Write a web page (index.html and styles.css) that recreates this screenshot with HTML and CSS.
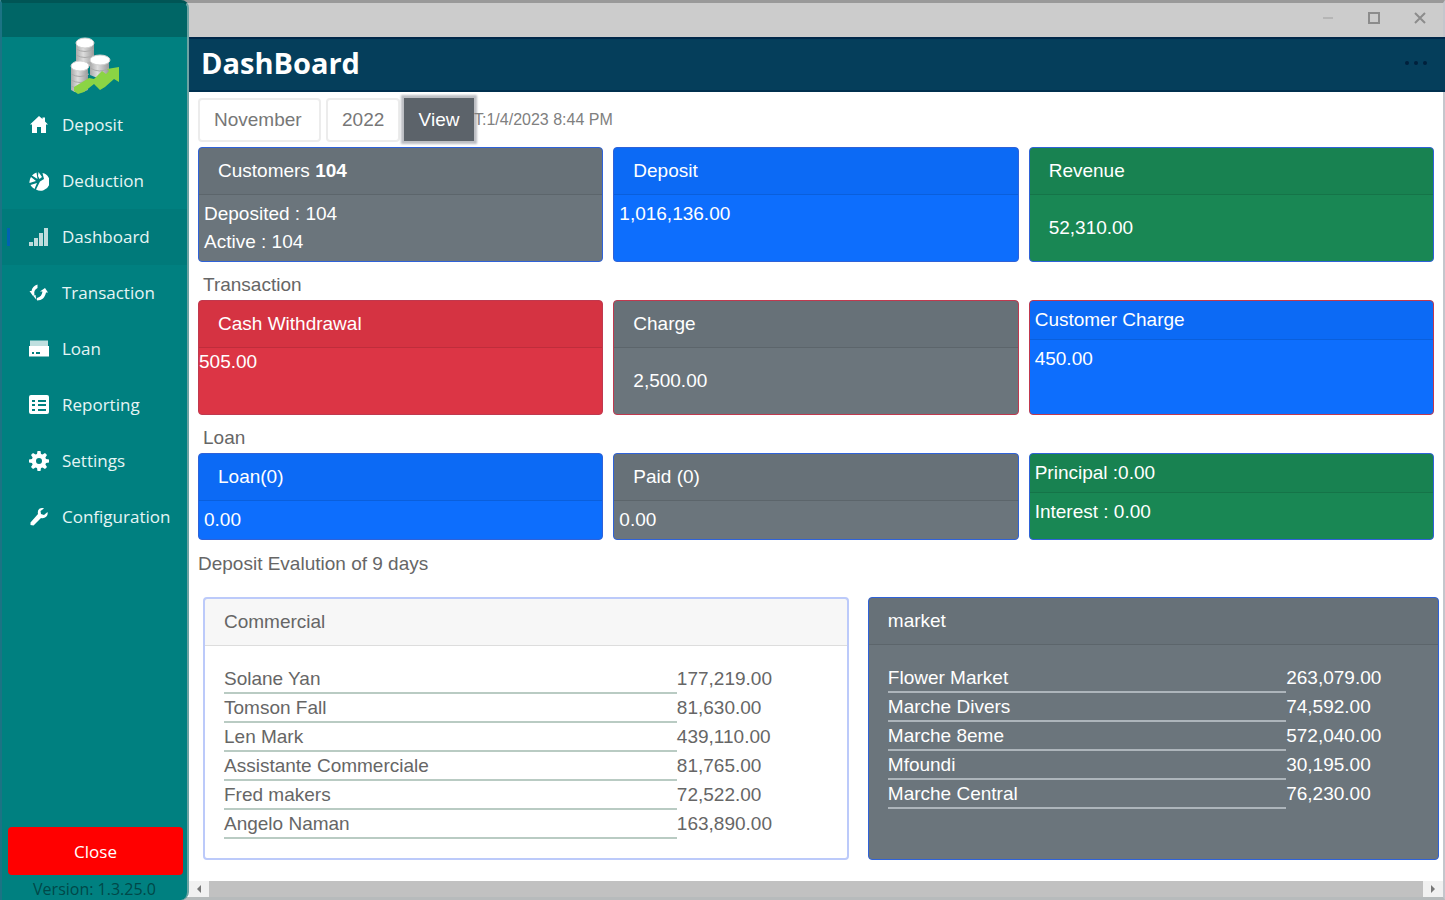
FILE: index.html
```html
<!DOCTYPE html>
<html lang="en">
<head>
    <meta charset="UTF-8">
    <meta name="viewport" content="width=device-width, initial-scale=1.0">
    <title>DashBoard</title>
    <link rel="stylesheet" href="styles.css">
</head>
<body>
    <div class="app">
        <!-- Sidebar -->
        <aside class="sidebar">
            <div class="sidebar-top"></div>
            <svg class="logo" viewBox="0 0 52 58" aria-hidden="true">
                <defs>
                    <linearGradient id="metal" x1="0" x2="1" y1="0" y2="0">
                        <stop offset="0" stop-color="#a9a9a9"/>
                        <stop offset="0.4" stop-color="#dedede"/>
                        <stop offset="1" stop-color="#9a9a9a"/>
                    </linearGradient>
                </defs>
                <path d="M7 5v24h18V5z" fill="url(#metal)"/>
                <path d="M7 12q9 5 18 0M7 18q9 5 18 0M7 24q9 5 18 0" fill="none" stroke="#aaa"/>
                <ellipse cx="16" cy="6" rx="9" ry="5" fill="#fff" stroke="#cfcfcf"/>
                <path d="M21 23v15q10 5 19 0V23z" fill="url(#metal)"/>
                <path d="M21 31q10 6 19 0" fill="none" stroke="#aaa"/>
                <ellipse cx="31" cy="23" rx="10" ry="5" fill="#fff" stroke="#cfcfcf"/>
                <path d="M2 29v24q7 5 17 0V29z" fill="url(#metal)"/>
                <path d="M2 37q9 5 18 0M2 43q9 5 18 0M2 49q9 5 18 0" fill="none" stroke="#aaa"/>
                <ellipse cx="11" cy="29" rx="9" ry="5" fill="#fff" stroke="#cfcfcf"/>
                <path d="M5 50 20 41l5 1 8-8 4 3 3-3-2-2 12-2v15l-5-3-9 8-5 3-6-6-10 8-6 2-4-3z" fill="#8bd444"/>
            </svg>
            <nav class="menu">
                <a class="menu-item" href="#">
                    <svg class="icon" viewBox="0 0 20 20"><path d="M10 1 1 9.500h2V18h5v-6h4v6h5V9.500h2L16 6.500V2.500h-2.500V4z"/></svg>
                    Deposit
                </a>
                <a class="menu-item" href="#">
                    <svg class="icon" viewBox="0 0 20 20"><path d="M7.500 1.500A9 9 0 0 0 3 4.500l5.500 3.500zM2 6a9 9 0 0 0-1.500 6L7 10zM1.500 14a9 9 0 0 0 4 4L8 12zM13.500 2A9 9 0 1 1 7 18.500l4-8L15 8z"/><path d="M9.500 1 13 6l-2.500 2-1.500-3z"/></svg>
                    Deduction
                </a>
                <a class="menu-item active" href="#">
                    <svg class="icon" viewBox="0 0 20 20"><path d="M0 15h4v4H0zM5 11h4v8H5zM10 6h4v13h-4zM15 1h4v18h-4z" fill-opacity=".75"/></svg>
                    Dashboard
                </a>
                <a class="menu-item" href="#">
                    <svg class="icon" viewBox="0 0 20 20"><path d="M8.500 1.500C5 2.500 3 5 2.500 8H0.500l3.500 5 1.500-1.500c-.8-3 .2-5 3-6.500zM8 17.500c5 0 8-3 9-8h2L16 5l-5 3.500h2.500c-.5 3.500-2 5.500-5.500 6.500z"/><path d="M4 12.500l3.500 4.500-1-5z"/></svg>
                    Transaction
                </a>
                <a class="menu-item" href="#">
                    <svg class="icon" viewBox="0 0 20 20"><path d="M1 1.500h18v6H1z" fill-opacity=".75"/><path fill-rule="evenodd" d="M0 7h20v10.500H0zM3 13v2h2v-2zM7 13v2h4v-2z"/></svg>
                    Loan
                </a>
                <a class="menu-item" href="#">
                    <svg class="icon" viewBox="0 0 20 20"><path fill-rule="evenodd" d="M2 0h16a2 2 0 0 1 2 2v15a2 2 0 0 1-2 2H2a2 2 0 0 1-2-2V2a2 2 0 0 1 2-2zM3 5v2h3V5zM9 5v2h8V5zM3 9v2h3V9zM9 9v2h8V9zM3 14v2h3v-2zM9 14v2h8v-2z"/></svg>
                    Reporting
                </a>
                <a class="menu-item" href="#">
                    <svg class="icon" viewBox="0 0 20 20"><path fill-rule="evenodd" d="M8.500 0h3l.5 3 1.500.6L16 2l2 2-1.600 2.500.6 1.500 3 .5v3l-3 .5-.6 1.500L18 16l-2 2-2.500-1.600-1.500.6-.5 3h-3L8 17l-1.500-.6L4 18l-2-2 1.600-2.500L3 12l-3-.5v-3L3 8l.6-1.500L2 4l2-2 2.500 1.600L8 3zM10 7a3 3 0 1 0 0 6 3 3 0 0 0 0-6z"/></svg>
                    Settings
                </a>
                <a class="menu-item" href="#">
                    <svg class="icon" viewBox="0 0 20 20"><path d="M18.500 5 15 8l-3-1-.5-3L15 1.500C11 0 8 3 9 7l-7.500 8.500 0 2.500 3 .5L12 11c4 1 7.500-2 6.500-6z"/></svg>
                    Configuration
                </a>
            </nav>
            <button type="button" class="close-app">Close</button>
            <div class="version">Version: 1.3.25.0</div>
        </aside>

        <main class="main">
            <div class="window-bar">
                <button type="button" class="window-btn minimize" aria-label="Minimize">
                    <svg viewBox="0 0 12 12"><path d="M1 6h10"/></svg>
                </button>
                <button type="button" class="window-btn" aria-label="Maximize">
                    <svg viewBox="0 0 12 12"><path d="M1 1h10v10H1z"/></svg>
                </button>
                <button type="button" class="window-btn" aria-label="Close window">
                    <svg viewBox="0 0 12 12"><path d="M1 1l10 10M11 1 1 11"/></svg>
                </button>
            </div>

            <header class="header">
                <h1>DashBoard</h1>
                <button type="button" class="more" aria-label="More">
                    <svg viewBox="0 0 24 4"><circle cx="3" cy="2" r="2"/><circle cx="12" cy="2" r="2"/><circle cx="21" cy="2" r="2"/></svg>
                </button>
            </header>

            <div class="content">
                <form class="filter">
                    <input type="text" class="month" aria-label="Month" value="November">
                    <input type="text" class="year" aria-label="Year" value="2022">
                    <button type="button" class="view">View</button>
                    <span class="time">T:1/4/2023 8:44 PM</span>
                </form>

                <div class="cards">
                    <div class="card gray">
                        <div class="card-header">Customers <strong>104</strong></div>
                        <div class="card-body small">Deposited : 104<br>Active : 104</div>
                    </div>
                    <div class="card blue">
                        <div class="card-header">Deposit</div>
                        <div class="card-body small">1,016,136.00</div>
                    </div>
                    <div class="card green">
                        <div class="card-header">Revenue</div>
                        <div class="card-body">52,310.00</div>
                    </div>
                </div>

                <div class="section-label">Transaction</div>
                <div class="cards danger">
                    <div class="card red">
                        <div class="card-header">Cash Withdrawal</div>
                        <div class="card-body flush">505.00</div>
                    </div>
                    <div class="card gray">
                        <div class="card-header">Charge</div>
                        <div class="card-body">2,500.00</div>
                    </div>
                    <div class="card blue">
                        <div class="card-header small">Customer Charge</div>
                        <div class="card-body small">450.00</div>
                    </div>
                </div>

                <div class="section-label">Loan</div>
                <div class="cards">
                    <div class="card blue">
                        <div class="card-header">Loan(0)</div>
                        <div class="card-body small">0.00</div>
                    </div>
                    <div class="card gray">
                        <div class="card-header">Paid (0)</div>
                        <div class="card-body small">0.00</div>
                    </div>
                    <div class="card green">
                        <div class="card-header small">Principal :0.00</div>
                        <div class="card-body small">Interest : 0.00</div>
                    </div>
                </div>

                <div class="evolution">Deposit Evalution of 9 days</div>

                <div class="panels">
                    <section class="card light commercial">
                        <div class="card-header">Commercial</div>
                        <div class="card-body">
                            <table>
                                <tr><td>Solane Yan</td><td>177,219.00</td></tr>
                                <tr><td>Tomson Fall</td><td>81,630.00</td></tr>
                                <tr><td>Len Mark</td><td>439,110.00</td></tr>
                                <tr><td>Assistante Commerciale</td><td>81,765.00</td></tr>
                                <tr><td>Fred makers</td><td>72,522.00</td></tr>
                                <tr><td>Angelo Naman</td><td>163,890.00</td></tr>
                            </table>
                        </div>
                    </section>
                    <section class="card gray market">
                        <div class="card-header">market</div>
                        <div class="card-body">
                            <table>
                                <tr><td>Flower Market</td><td>263,079.00</td></tr>
                                <tr><td>Marche Divers</td><td>74,592.00</td></tr>
                                <tr><td>Marche 8eme</td><td>572,040.00</td></tr>
                                <tr><td>Mfoundi</td><td>30,195.00</td></tr>
                                <tr><td>Marche Central</td><td>76,230.00</td></tr>
                            </table>
                        </div>
                    </section>
                </div>
            </div>

            <div class="scrollbar">
                <button type="button" aria-label="Scroll left"><svg viewBox="0 0 6 8"><path d="M5 0v8L1 4z"/></svg></button>
                <div class="thumb"></div>
                <button type="button" aria-label="Scroll right"><svg viewBox="0 0 6 8"><path d="M1 0v8l4-4z"/></svg></button>
            </div>
        </main>
    </div>
</body>
</html>
```

FILE: styles.css
```css
* {
    box-sizing: border-box;
}

body {
    margin: 0;
    font-family: "Liberation Sans", Arial, sans-serif;
    font-size: 19px;
    line-height: 28px;
    color: #666;
    background-color: #fff;
}

button, input {
    font-family: inherit;
    font-size: inherit;
    border: none;
    padding: 0;
}

.app {
    display: flex;
    height: 100vh;
    background-color: #fff;
    overflow: hidden;
}

/* Sidebar */
.sidebar {
    display: flex;
    flex-direction: column;
    flex: 0 0 189px;
    z-index: 1;
    background-color: #008080;
    border-top: 3px solid #005555;
    border-left: 2px solid #1c7384;
    border-right: 2px solid #6da3a3;
    border-radius: 0 8px 8px 0;
    font-family: "Open Sans", "Noto Sans", sans-serif;
    overflow: hidden;
}

.sidebar-top {
    height: 34px;
    background-color: #006666;
}

.logo {
    width: 52px;
    height: 58px;
    margin-left: 67px;
}

.menu {
    display: flex;
    flex-direction: column;
    flex: 1;
    padding-top: 2px;
}

.menu-item {
    display: flex;
    align-items: center;
    gap: 13px;
    height: 56px;
    padding-left: 27px;
    color: #e6f5f5;
    font-size: 17px;
    text-decoration: none;
}

.menu-item.active {
    position: relative;
    background-color: #007a7a;
}

.menu-item.active::before {
    content: "";
    position: absolute;
    left: 5px;
    width: 3px;
    height: 18px;
    background-color: #0063b1;
}

.icon {
    width: 20px;
    height: 20px;
    fill: #fff;
}

.close-app {
    height: 48px;
    margin: 0 4px 0 6px;
    border-radius: 4px;
    background-color: #ff0000;
    color: #fff;
    font-size: 17px;
}

.version {
    height: 25px;
    color: #004848;
    font-size: 16px;
    text-align: center;
}

/* Window */
.main {
    display: flex;
    flex-direction: column;
    flex: 1;
    min-width: 0;
    margin-left: -8px;
    padding-left: 8px;
    border-top: 3px solid #999;
    border-right: 2px solid #c4c6cc;
    border-bottom: 3px solid #b7bbbc;
}

.window-bar {
    display: flex;
    justify-content: flex-end;
    flex: 0 0 34px;
    margin-left: -8px;
    background-color: #ccc;
}

.window-btn {
    width: 46px;
    height: 30px;
    background: none;
}

.window-btn svg {
    width: 12px;
    height: 12px;
    fill: none;
    stroke: #8c8c8c;
    stroke-width: 2;
}

.window-btn.minimize svg {
    stroke: #b5b5b5;
}

.header {
    display: flex;
    align-items: center;
    justify-content: space-between;
    flex: 0 0 55px;
    margin-right: -2px;
    padding: 0 17px 4px 12px;
    background-color: #053e5b;
    border-top: 2px solid #00284a;
    border-bottom: 2px solid #00304f;
}

h1 {
    margin: 0;
    color: #fff;
    font-family: "Open Sans", "Noto Sans", sans-serif;
    font-size: 29px;
    font-weight: 700;
    line-height: 40px;
}

.more {
    display: flex;
    background: none;
}

.more svg {
    width: 24px;
    height: 4px;
    fill: #00203c;
}

/* Dashboard content */
.content {
    flex: 1;
    padding: 5px 9px 0;
}

.filter {
    display: flex;
    align-items: center;
    height: 45px;
    margin-bottom: 5px;
}

.filter input {
    height: 44px;
    padding: 0 14px;
    border: 2px solid #ececec;
    border-radius: 4px;
    color: #777;
    background-color: #fff;
}

.month {
    width: 123px;
    margin-right: 5px;
}

.year {
    width: 74px;
    margin-right: 4px;
}

.view {
    width: 70px;
    height: 43px;
    background-color: #5c636a;
    box-shadow: 0 0 2px 3px #bcbec3;
    color: #fff;
}

.time {
    color: #808080;
    font-size: 16px;
}

.cards {
    display: flex;
    gap: 10px;
}

.cards .card {
    flex: 1;
}

.card {
    border: 1px solid #2f62d8;
    border-radius: 4px;
    color: #fff;
}

.danger .card {
    border-color: #c0394f;
}

.card-header {
    padding: 9px 19px;
    background-color: rgba(0, 0, 0, 0.03);
    border-bottom: 1px solid rgba(0, 0, 0, 0.1);
}

.card-body {
    padding: 19px;
}

.small {
    padding: 5px;
}

.flush {
    padding: 0;
}

.gray {
    background-color: #6b757c;
}

.blue {
    background-color: #0d6efd;
}

.green {
    background-color: #198754;
}

.red {
    background-color: #dc3545;
}

.section-label {
    padding: 9px 5px 1px;
}

.evolution {
    margin: 10px 0 19px;
}

.panels {
    display: flex;
    gap: 19px;
    margin: 0 -5px 0 5px;
}

.commercial {
    flex: 645;
}

.market {
    flex: 572;
}

.light {
    background-color: #fff;
    border: 2px solid #bccafa;
    color: #666;
}

table {
    width: 100%;
    table-layout: fixed;
    border-collapse: separate;
    border-spacing: 0;
}

td {
    height: 29px;
    padding: 0;
    line-height: 27px;
    border-bottom: 2px solid transparent;
}

td:first-child {
    width: 75%;
    border-bottom-color: #b9cbc3;
}

.market td:first-child {
    border-bottom-color: #adb5bb;
}

/* Horizontal scrollbar */
.scrollbar {
    display: flex;
    flex: 0 0 16px;
    background-color: #f1f1f1;
}

.scrollbar button {
    display: flex;
    align-items: center;
    justify-content: center;
    flex: 0 0 20px;
    background: none;
}

.scrollbar svg {
    width: 6px;
    height: 8px;
    fill: #777;
}

.thumb {
    flex: 1;
    background-color: #c1c1c1;
}
```
